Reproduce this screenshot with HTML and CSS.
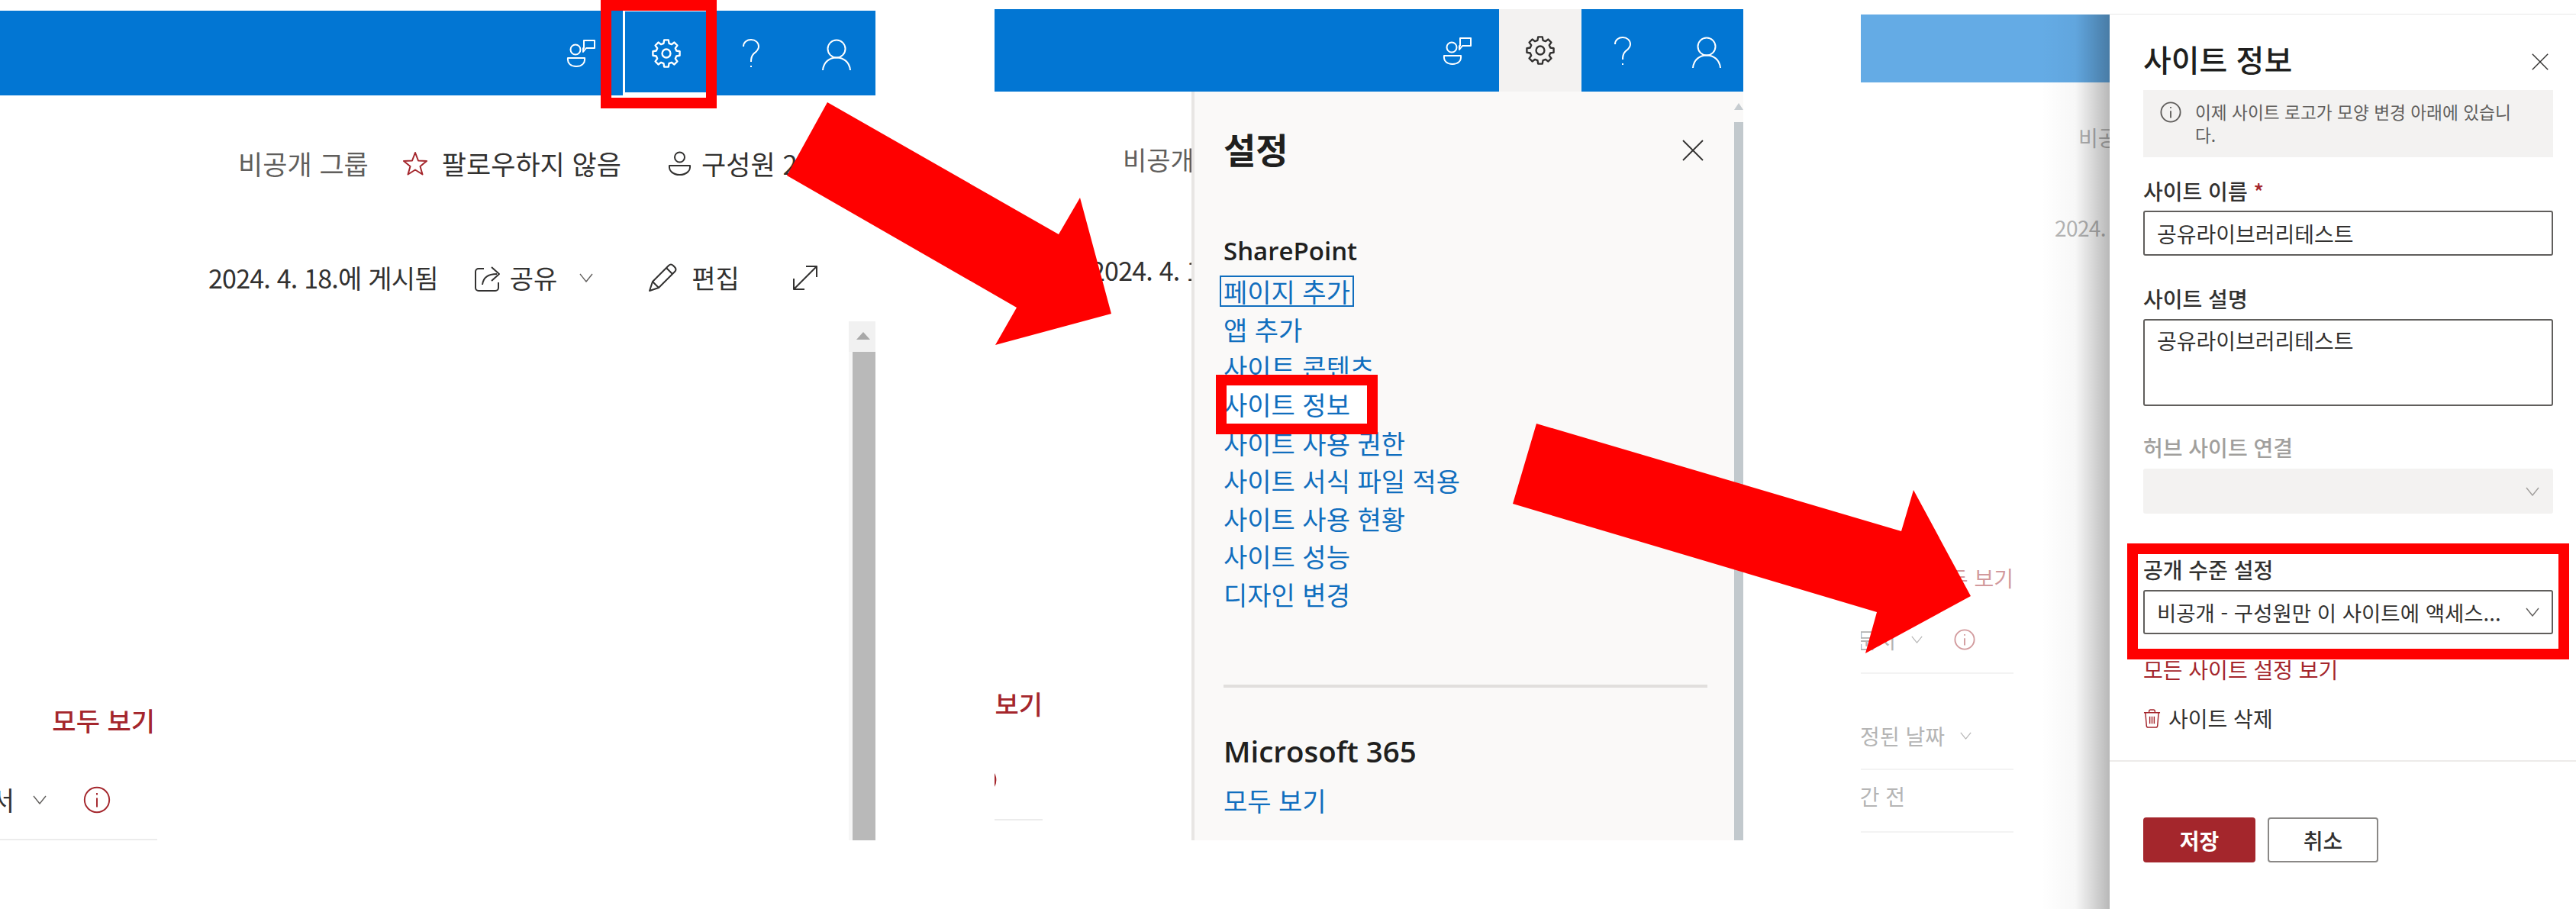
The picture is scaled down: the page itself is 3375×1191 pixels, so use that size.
FILE: index.html
```html
<!DOCTYPE html>
<html lang="ko">
<head>
<meta charset="utf-8">
<title>사이트 정보</title>
<link rel="stylesheet" href="styles.css">
</head>
<body>
<svg class="defs" aria-hidden="true">
  <symbol id="i-people" viewBox="0 0 38 37"><circle cx="12" cy="14" r="6.5"/><path d="M2 25H24C25 32 20 36 13 36C6 36 1 32 2 25Z"/><path d="M23 2H37V12H26L22 17V12H23Z"/></symbol>
  <symbol id="i-gear" viewBox="0 0 32 32"><polygon points="27.11,13.02 30.82,13.65 30.82,18.35 27.11,18.98 25.96,21.75 28.14,24.82 24.82,28.14 21.75,25.96 18.98,27.11 18.35,30.82 13.65,30.82 13.02,27.11 10.25,25.96 7.18,28.14 3.86,24.82 6.04,21.75 4.89,18.98 1.18,18.35 1.18,13.65 4.89,13.02 6.04,10.25 3.86,7.18 7.18,3.86 10.25,6.04 13.02,4.89 13.65,1.18 18.35,1.18 18.98,4.89 21.75,6.04 24.82,3.86 28.14,7.18 25.96,10.25"/><circle cx="16" cy="16" r="4.6"/></symbol>
  <symbol id="i-help" viewBox="0 0 24 38"><path d="M2 10C2 4 7 1 12 1C18 1 22 5 22 10C22 15 18 17 15 20C13 22 12 24 12 30"/><path d="M12 35V37"/></symbol>
  <symbol id="i-user" viewBox="0 0 38 41"><circle cx="19" cy="13" r="11.5"/><path d="M1 41C2 30 10 24.500 19 24.500C28 24.500 36 30 37 41"/></symbol>
  <symbol id="i-star" viewBox="0 0 34 32"><polygon points="17,2 21,12.500 32,13 23.500,20 26.500,30.500 17,24.500 7.500,30.500 10.500,20 2,13 13,12.500"/></symbol>
  <symbol id="i-member" viewBox="0 0 31 32"><circle cx="15.500" cy="8" r="6.500"/><path d="M2 19H29C30 26 24 31 15.500 31C7 31 1 26 2 19Z"/></symbol>
  <symbol id="i-share" viewBox="0 0 36 38"><path d="M13 7H6A4 4 0 0 0 2 11V32A4 4 0 0 0 6 36H28A4 4 0 0 0 32 32V25"/><path d="M11 28C12 19 18 14 30 14"/><path d="M23 5L33 14L23 23"/></symbol>
  <symbol id="i-pencil" viewBox="0 0 38 38"><path d="M2 36L6 24L27 3Q30 0 33 3L35 5Q38 8 35 11L14 32Z"/><path d="M6 24L14 32M24 6L32 14"/></symbol>
  <symbol id="i-expand" viewBox="0 0 34 34"><path d="M2 32L32 2M18 2H32V16M2 18V32H16"/></symbol>
  <symbol id="i-chev" viewBox="0 0 18 12"><path d="M1 1L9 11L17 1"/></symbol>
  <symbol id="i-info" viewBox="0 0 30 30"><circle cx="15" cy="15" r="13.500"/><path d="M15 13V23M15 7.500V9.500"/></symbol>
  <symbol id="i-x" viewBox="0 0 28 28"><path d="M1 1L27 27M27 1L1 27"/></symbol>
  <symbol id="i-trash" viewBox="0 0 24 26"><path d="M1 5H23M8 5V3Q8 1 10 1H14Q16 1 16 3V5M3 5L4.500 23Q4.700 25 7 25H17Q19.300 25 19.500 23L21 5M9 10V20M12 10V20M15 10V20"/></symbol>
</svg>

<main class="canvas">
  <section class="panel panel-one">
    <header class="topbar bar-one">
      <svg class="ico ico-people"><use href="#i-people"/></svg>
      <div class="gear-cell">
        <span class="gear-strip"></span>
        <span class="gear-inner"><svg class="ico ico-gear"><use href="#i-gear"/></svg></span>
      </div>
      <svg class="ico ico-help help-one"><use href="#i-help"/></svg>
      <svg class="ico ico-user user-one"><use href="#i-user"/></svg>
    </header>
    <div class="row row-group">
      <span class="muted">비공개 그룹</span>
      <svg class="ico ico-star"><use href="#i-star"/></svg>
      <span class="follow">팔로우하지 않음</span>
      <svg class="ico ico-member"><use href="#i-member"/></svg>
      <span class="members">구성원 2</span>
    </div>
    <div class="row row-actions">
      <span class="date">2024. 4. 18.에 게시됨</span>
      <svg class="ico ico-share"><use href="#i-share"/></svg>
      <span class="share-text">공유</span>
      <svg class="ico ico-chev share-chev"><use href="#i-chev"/></svg>
      <svg class="ico ico-pencil"><use href="#i-pencil"/></svg>
      <span class="edit-text">편집</span>
      <svg class="ico ico-expand"><use href="#i-expand"/></svg>
    </div>
    <div class="doc-col">
      <div class="row see-all">모두 보기</div>
      <div class="doc-row">
        <span class="doc-name">문서</span>
        <svg class="ico ico-chev"><use href="#i-chev"/></svg>
        <svg class="ico ico-info"><use href="#i-info"/></svg>
      </div>
    </div>
    <div class="scrollbar">
      <span class="scroll-up"></span>
      <span class="scroll-thumb"></span>
    </div>
  </section>

  <section class="panel panel-two">
    <header class="topbar bar-two">
      <svg class="ico ico-people"><use href="#i-people"/></svg>
      <div class="gear-open"><svg class="ico ico-gear"><use href="#i-gear"/></svg></div>
      <svg class="ico ico-help help-two"><use href="#i-help"/></svg>
      <svg class="ico ico-user user-two"><use href="#i-user"/></svg>
    </header>
    <div class="panel-body">
      <div class="frag frag-two">
        <div class="row frag-group muted">비공개 그룹</div>
        <div class="row frag-date date">2024. 4. 18.에 게시됨</div>
        <div class="row frag-all">모두 보기</div>
        <div class="frag-doc"><svg class="ico ico-info"><use href="#i-info"/></svg></div>
      </div>
      <aside class="settings">
        <div class="settings-head">
          <h2 class="settings-title">설정</h2>
          <svg class="ico ico-x"><use href="#i-x"/></svg>
        </div>
        <h3 class="settings-sub">SharePoint</h3>
        <ul class="links">
          <li class="link"><a class="focus">페이지 추가</a></li>
          <li class="link"><a>앱 추가</a></li>
          <li class="link"><a>사이트 콘텐츠</a></li>
          <li class="link link-hl"><a class="hl"><span>사이트 정보</span></a></li>
          <li class="link"><a>사이트 사용 권한</a></li>
          <li class="link"><a>사이트 서식 파일 적용</a></li>
          <li class="link"><a>사이트 사용 현황</a></li>
          <li class="link"><a>사이트 성능</a></li>
          <li class="link"><a>디자인 변경</a></li>
        </ul>
        <hr class="settings-rule">
        <h3 class="settings-ms">Microsoft 365</h3>
        <div class="link ms-all"><a>모두 보기</a></div>
        <div class="settings-scroll">
          <span class="settings-up"></span>
          <span class="settings-thumb"></span>
        </div>
      </aside>
    </div>
  </section>

  <section class="panel panel-three">
    <div class="frag frag-three">
      <div class="bar-dim"></div>
      <div class="row dim-group">비공개 그룹</div>
      <div class="row dim-date">2024. 4. 18.에 게시됨</div>
      <div class="dim-col">
        <div class="row dim-all">모두 보기</div>
        <div class="dim-row dim-a">
          <span>문서</span>
          <svg class="ico ico-chev"><use href="#i-chev"/></svg>
          <svg class="ico ico-info"><use href="#i-info"/></svg>
        </div>
        <div class="dim-row dim-b">
          <span>수정된 날짜</span>
          <svg class="ico ico-chev"><use href="#i-chev"/></svg>
        </div>
        <div class="dim-row dim-c"><span>1시간 전</span></div>
      </div>
    </div>
    <aside class="info-pane">
      <div class="pane-head">
        <h2 class="pane-title">사이트 정보</h2>
        <svg class="ico ico-x pane-x"><use href="#i-x"/></svg>
      </div>
      <div class="notice">
        <svg class="ico notice-ico"><use href="#i-info"/></svg>
        <p class="notice-text">이제 사이트 로고가 모양 변경 아래에 있습니다.</p>
      </div>
      <label class="label name-label">사이트 이름 <span class="req">*</span></label>
      <div class="input">공유라이브러리테스트</div>
      <label class="label desc-label">사이트 설명</label>
      <div class="input textarea">공유라이브러리테스트</div>
      <label class="label hub-label">허브 사이트 연결</label>
      <div class="input select disabled"><svg class="ico ico-chev"><use href="#i-chev"/></svg></div>
      <div class="visibility">
        <label class="label">공개 수준 설정</label>
        <div class="input select vis-select">
          <span class="vis-text">비공개 - 구성원만 이 사이트에 액세스...</span>
          <svg class="ico ico-chev"><use href="#i-chev"/></svg>
        </div>
      </div>
      <a class="all-settings">모든 사이트 설정 보기</a>
      <div class="delete-row">
        <svg class="ico ico-trash"><use href="#i-trash"/></svg>
        <span>사이트 삭제</span>
      </div>
      <hr class="pane-rule">
      <div class="buttons">
        <button class="btn btn-save">저장</button>
        <button class="btn btn-cancel">취소</button>
      </div>
    </aside>
  </section>

  <svg class="arrows" viewBox="0 0 3375 1191" aria-hidden="true">
    <polygon points="1084,134 1387,307 1415,259 1456,411 1304,452 1332,403 1031,230"/>
    <polygon points="2013,555 2491,696 2507,642 2582,781 2444,856 2459,802 1982,660"/>
  </svg>
</main>
</body>
</html>
```

FILE: styles.css
```css
* { box-sizing: border-box; }
html, body { margin: 0; padding: 0; background: #fff; }
body {
  font-family: "Noto Sans CJK KR", "Open Sans", sans-serif;
  font-size: 34px;
  color: #323130;
  width: 3375px;
  height: 1191px;
  overflow: hidden;
}
h2, h3, p, ul { margin: 0; padding: 0; font-weight: inherit; }
ul { list-style: none; }
hr { border: 0; margin: 0; }

.defs { display: none; }
.ico { display: block; flex: none; fill: none; stroke: currentColor; stroke-width: 2; stroke-linejoin: round; }

.canvas { position: relative; width: 3375px; height: 1191px; display: flex; align-items: flex-start; }
.panel { position: relative; background: #fff; flex: none; }
.panel-one { width: 1147px; height: 1087px; margin-top: 14px; }
.panel-two { width: 981px; height: 1089px; margin: 12px 0 0 156px; }
.panel-three { width: 937px; height: 1172px; margin: 19px 0 0 154px; display: flex; }

.row { display: flex; align-items: center; height: 40px; white-space: nowrap; line-height: 40px; }
.date { letter-spacing: -0.8px; }

/* top bars */
.topbar { display: flex; align-items: flex-start; justify-content: flex-end; background: #0276d3; color: #fff; }
.bar-one { height: 111px; padding-right: 32px; }
.bar-two { height: 108px; padding-right: 29px; }
.ico-people { width: 38px; height: 37px; margin-top: 37px; }
.bar-two .ico-people { margin-top: 36px; }
.ico-gear { width: 38px; height: 38px; }
.ico-help { width: 24px; height: 38px; }
.ico-user { width: 38px; height: 41px; }
.gear-cell {
  position: relative;
  z-index: 1;
  display: flex;
  align-items: flex-start;
  width: 124px;
  height: 114px;
  margin-left: 21px;
  background: #fff;
  box-shadow: 0 0 0 14px #f00;
}
.gear-strip { width: 15px; height: 111px; background: #0276d3; }
.gear-inner {
  display: flex;
  justify-content: center;
  flex: 1;
  height: 106px;
  margin: 1px 0 0 3px;
  padding: 36px 0 0 2px;
  background: #0276d3;
  color: #fff;
}
.ico-help.help-one { margin: 37px 0 0 47px; }
.ico-user.user-one { margin: 37px 0 0 81px; }
.gear-open {
  display: flex;
  justify-content: center;
  width: 108px;
  height: 108px;
  margin-left: 36px;
  padding-top: 35px;
  background: #f3f2f1;
  color: #323130;
}
.ico-help.help-two { margin: 36px 0 0 42px; }
.ico-user.user-two { margin: 36px 0 0 79px; }

/* first panel */
.muted { color: #605e5c; }
.row-group { margin-top: 69px; padding-left: 312px; font-size: 35px; }
.ico-star { width: 34px; height: 32px; margin-left: 44px; color: #a4262c; }
.follow { margin-left: 18px; }
.ico-member { width: 31px; height: 32px; margin-left: 61px; }
.members { margin-left: 13px; }
.row-actions { margin-top: 110px; padding-left: 273px; }
.ico-share { width: 36px; height: 38px; margin-left: 47px; }
.share-text { margin-left: 11px; }
.ico-chev { width: 18px; height: 12px; color: #605e5c; stroke-width: 1.4; }
.share-chev { margin-left: 29px; }
.ico-pencil { width: 38px; height: 38px; margin-left: 72px; }
.edit-text { margin-left: 19px; }
.ico-expand { width: 34px; height: 34px; margin-left: 69px; }
.doc-col { width: 206px; margin-top: 540px; overflow: hidden; }
.see-all { justify-content: flex-end; padding-right: 3px; font-weight: 500; color: #a4262c; }
.doc-row {
  display: flex;
  align-items: center;
  justify-content: flex-end;
  height: 137px;
  padding: 62px 61px 30px 0;
  border-bottom: 2px solid #ececec;
  white-space: nowrap;
}
.doc-row .ico-info { width: 36px; height: 36px; margin-left: 48px; color: #a4262c; stroke-width: 1.6; }
.doc-name { margin-right: 24px; }
.scrollbar {
  position: absolute;
  top: 407px;
  right: 0;
  bottom: 0;
  width: 35px;
  display: flex;
  flex-direction: column;
  background: #f6f6f6;
}
.scroll-up { position: relative; height: 40px; background: #f1f1f1; }
.scroll-up::after {
  content: "";
  position: absolute;
  left: 10px;
  top: 14px;
  border-left: 9px solid transparent;
  border-right: 9px solid transparent;
  border-bottom: 10px solid #a8a8a8;
}
.scroll-thumb { flex: 1; margin-left: 5px; background: #b9b9b9; }

/* second panel */
.panel-body { display: flex; height: 981px; }
.frag { flex: none; overflow: hidden; }
.frag-two { width: 258px; }
.frag-group { margin-top: 69px; padding-left: 168px; }
.frag-date { margin-top: 105px; padding-left: 126px; }
.frag-all { width: 63px; margin-top: 528px; justify-content: flex-end; font-weight: 500; color: #a4262c; }
.frag-doc {
  display: flex;
  justify-content: flex-end;
  width: 63px;
  height: 74px;
  margin-top: 59px;
  padding: 3px 60px 0 0;
  border-bottom: 2px solid #ececec;
}
.frag-doc .ico-info { width: 36px; height: 36px; color: #a4262c; }
.settings {
  position: relative;
  flex: none;
  width: 723px;
  height: 981px;
  overflow: hidden;
  padding: 46px 0 0 38px;
  background: #faf9f8;
  border-left: 4px solid #e8e6e4;
}
.settings-head { display: flex; justify-content: space-between; align-items: center; height: 56px; padding-right: 52px; }
.settings-title { font-size: 46px; font-weight: 700; color: #201f1e; line-height: 56px; }
.ico-x { width: 28px; height: 28px; color: #323130; stroke-width: 1.8; margin-top: 6px; }
.settings-sub { margin-top: 85px; height: 44px; line-height: 44px; font-family: "Open Sans", sans-serif; font-size: 33px; font-weight: 600; color: #201f1e; }
.links { margin-top: 6px; }
.link { display: flex; align-items: center; height: 49.6px; color: #106ebe; white-space: nowrap; line-height: 37px; }
.focus { display: block; height: 37px; margin-left: -3px; padding: 0 3px; outline: 2px solid #106ebe; }
.link-hl { position: relative; z-index: 1; }
.hl {
  display: block;
  width: 184px;
  height: 50px;
  margin: -2px 0 0 4px;
  overflow: hidden;
  background: #fff;
  line-height: 50px;
  box-shadow: 0 0 0 14px #f00;
}
.hl span { display: block; margin-left: -4px; }
.settings-rule { width: 634px; height: 4px; margin-top: 94px; background: #e1dfdd; }
.settings-ms { margin-top: 55px; height: 56px; line-height: 56px; font-family: "Open Sans", sans-serif; font-size: 38.5px; font-weight: 600; color: #201f1e; }
.ms-all { margin-top: 11px; height: 50px; }
.settings-scroll {
  position: absolute;
  top: 0;
  right: 0;
  bottom: 0;
  width: 12px;
  display: flex;
  flex-direction: column;
}
.settings-up { height: 40px; position: relative; }
.settings-up::after {
  content: "";
  position: absolute;
  left: 0;
  top: 15px;
  border-left: 6px solid transparent;
  border-right: 6px solid transparent;
  border-bottom: 9px solid #c6ccd0;
}
.settings-thumb { flex: 1; background: #c2c9cd; }

/* third panel */
.frag-three { position: relative; width: 326px; height: 1172px; font-size: 28px; color: #b5b5b5; }
.frag-three::after {
  content: "";
  position: absolute;
  top: 0;
  right: 0;
  bottom: 0;
  width: 90px;
  background: linear-gradient(to right, rgba(0,0,0,0), rgba(0,0,0,.03) 50%, rgba(0,0,0,.28));
}
.bar-dim { height: 89px; background: #64abe5; }
.dim-group { margin-top: 52px; padding-left: 285px; }
.dim-date { margin-top: 78px; padding-left: 254px; letter-spacing: -0.6px; }
.dim-col { width: 200px; margin-top: 419px; overflow: hidden; }
.dim-all { justify-content: flex-end; color: #d29a9d; }
.dim-row {
  display: flex;
  align-items: center;
  justify-content: flex-end;
  height: 64px;
  padding-bottom: 24px;
  border-bottom: 2px solid #f3f3f3;
  white-space: nowrap;
}
.dim-row .ico-chev { color: #b5b5b5; width: 15px; height: 10px; margin-left: 20px; }
.dim-a { margin-top: 42px; padding-right: 50px; }
.dim-a .ico-info { width: 28px; height: 28px; margin-left: 41px; color: #d29a9d; }
.dim-b { margin-top: 62px; padding-right: 55px; }
.dim-c { height: 66px; padding-bottom: 28px; margin-top: 16px; padding-right: 142px; }

.info-pane {
  flex: none;
  width: 611px;
  height: 1172px;
  padding: 33px 30px 0 44px;
  background: #fff;
  font-size: 28px;
  box-shadow: 0 -1px 0 #e8e8e8;
}
.pane-head { display: flex; justify-content: space-between; align-items: center; height: 50px; }
.pane-title { font-size: 40px; font-weight: 500; line-height: 50px; color: #201f1e; }
.pane-x { width: 22px; height: 22px; margin: 8px 6px 0 0; }
.notice {
  display: flex;
  gap: 18px;
  height: 88px;
  margin-top: 16px;
  padding: 15px 32px 0 22px;
  background: #f3f2f1;
}
.notice-ico { width: 28px; height: 28px; color: #605e5c; }
.notice-text { font-size: 22.7px; line-height: 30px; margin-top: -1px; color: #605e5c; }
.label { display: block; height: 40px; line-height: 40px; font-weight: 500; color: #323130; white-space: nowrap; }
.req { color: #a4262c; }
.name-label { margin-top: 24px; }
.input {
  display: flex;
  align-items: center;
  height: 59px;
  margin-top: 6px;
  padding: 0 16px;
  border: 2px solid #605e5c;
  border-radius: 3px;
  background: #fff;
  white-space: nowrap;
}
.desc-label { margin-top: 36px; }
.textarea { align-items: flex-start; height: 114px; margin-top: 7px; padding-top: 6px; line-height: 40px; }
.hub-label { margin-top: 34px; color: #a19f9d; }
.select { justify-content: space-between; }
.select .ico-chev { margin-right: 0; }
.disabled { justify-content: flex-end; height: 59px; margin-top: 8px; background: #f3f2f1; border-color: #f3f2f1; }
.disabled .ico-chev { color: #a19f9d; }
.visibility {
  position: relative;
  margin: 53px -7px 0;
  padding: 0 7px 19px;
  background: #fff;
  box-shadow: 0 0 0 14px #f00;
}
.vis-select { height: 58px; margin-top: 7px; }
.vis-text { font-size: 27.5px; }
.all-settings { display: block; position: relative; height: 40px; line-height: 40px; margin-top: 7px; color: #a4262c; white-space: nowrap; }
.delete-row { display: flex; align-items: center; gap: 10px; height: 40px; margin-top: 24px; white-space: nowrap; }
.ico-trash { width: 23px; height: 25px; color: #a4262c; stroke-width: 1.5; }
.pane-rule { height: 2px; margin: 35px -30px 0 -44px; background: #edebe9; }
.buttons { display: flex; gap: 16px; margin-top: 73px; }
.btn { height: 59px; border-radius: 4px; font: inherit; font-weight: 700; padding: 0; }
.btn-save { width: 147px; border: 0; background: #a4262c; color: #fff; }
.btn-cancel { width: 145px; border: 2px solid #8a8886; background: #fff; color: #323130; font-weight: 500; }

/* annotation arrows */
.arrows { position: absolute; inset: 0; width: 3375px; height: 1191px; fill: #f00; pointer-events: none; z-index: 5; }
```
